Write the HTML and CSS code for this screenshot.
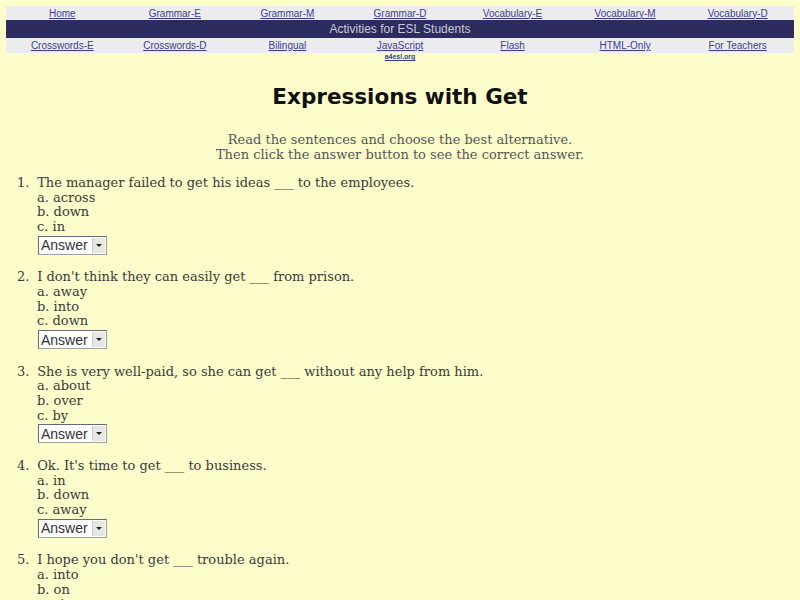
FILE: index.html
```html
<!DOCTYPE html>
<html lang="en">
<head>
    <meta charset="UTF-8">
    <title>Expressions with Get</title>
    <link rel="stylesheet" href="styles.css">
</head>
<body>
    <table class="nav">
        <tr class="nav-row">
            <td><a href="#">Home</a></td>
            <td><a href="#">Grammar-E</a></td>
            <td><a href="#">Grammar-M</a></td>
            <td><a href="#">Grammar-D</a></td>
            <td><a href="#">Vocabulary-E</a></td>
            <td><a href="#">Vocabulary-M</a></td>
            <td><a href="#">Vocabulary-D</a></td>
        </tr>
        <tr class="nav-band">
            <td colspan="7">Activities for ESL Students</td>
        </tr>
        <tr class="nav-row">
            <td><a href="#">Crosswords-E</a></td>
            <td><a href="#">Crosswords-D</a></td>
            <td><a href="#">Bilingual</a></td>
            <td><a href="#">JavaScript</a></td>
            <td><a href="#">Flash</a></td>
            <td><a href="#">HTML-Only</a></td>
            <td><a href="#">For Teachers</a></td>
        </tr>
        <tr class="nav-foot">
            <td colspan="7"><a href="#">a4esl.org</a></td>
        </tr>
    </table>

    <h1 class="title">Expressions with <i>Get</i></h1>

    <p class="intro">
        Read the sentences and choose the best alternative.<br>
        Then click the answer button to see the correct answer.
    </p>

    <ol class="quiz">
        <li>
            The manager failed to get his ideas ___ to the employees.
            <div class="opt">a. across</div>
            <div class="opt">b. down</div>
            <div class="opt">c. in</div>
            <span class="answer-box"><select class="answer"><option>Answer</option><option>across</option></select></span>
        </li>
        <li>
            I don't think they can easily get ___ from prison.
            <div class="opt">a. away</div>
            <div class="opt">b. into</div>
            <div class="opt">c. down</div>
            <span class="answer-box"><select class="answer"><option>Answer</option><option>away</option></select></span>
        </li>
        <li>
            She is very well-paid, so she can get ___ without any help from him.
            <div class="opt">a. about</div>
            <div class="opt">b. over</div>
            <div class="opt">c. by</div>
            <span class="answer-box"><select class="answer"><option>Answer</option><option>by</option></select></span>
        </li>
        <li>
            Ok. It's time to get ___ to business.
            <div class="opt">a. in</div>
            <div class="opt">b. down</div>
            <div class="opt">c. away</div>
            <span class="answer-box"><select class="answer"><option>Answer</option><option>down</option></select></span>
        </li>
        <li>
            I hope you don't get ___ trouble again.
            <div class="opt">a. into</div>
            <div class="opt">b. on</div>
            <div class="opt">c. at</div>
            <span class="answer-box"><select class="answer"><option>Answer</option><option>into</option></select></span>
        </li>
    </ol>
</body>
</html>
```

FILE: styles.css
```css
body {
    margin: 6px;
    background: #fdfdcc;
    color: #3a3a3a;
    font-family: "DejaVu Serif", serif;
    font-size: 13px;
}

/* top link table */
.nav {
    width: 100%;
    border-collapse: collapse;
    table-layout: fixed;
    font-family: "Liberation Sans", Arial, sans-serif;
    font-size: 10px;
}

.nav td {
    padding: 0;
    text-align: center;
}

.nav a {
    color: #3b3b92;
}

.nav-row td {
    background: #ececee;
    height: 14px;
}

.nav-band td {
    background: #2c2c5e;
    color: #c9c9dc;
    font-size: 12px;
    height: 18px;
}

.nav-row + .nav-band + .nav-row td {
    height: 15px;
}

.nav-foot td {
    font-size: 7px;
    font-weight: bold;
    height: 9px;
    vertical-align: top;
}

.title {
    margin: 22px 0 0;
    text-align: center;
    font-family: "DejaVu Sans", sans-serif;
    font-size: 21.5px;
    font-weight: bold;
    color: #111;
}

.title i {
    font-style: normal;
}

.intro {
    margin: 23px 0 0;
    text-align: center;
    color: #555;
    line-height: 15px;
}

/* questions */
.quiz {
    margin: 14px 0 0;
    padding-left: 31px;
    line-height: 14.7px;
    list-style: none;
    counter-reset: q;
}

.quiz li {
    margin-bottom: 15.5px;
    counter-increment: q;
}

.quiz li::before {
    content: counter(q) ".";
    display: inline-block;
    width: 16px;
    margin-left: -20px;
}

.answer-box {
    position: relative;
    display: inline-block;
    margin-left: 1px;
    margin-top: 1px;
}

.answer {
    appearance: none;
    -webkit-appearance: none;
    width: 69px;
    height: 19px;
    font-family: "Liberation Sans", Arial, sans-serif;
    font-size: 14px;
    color: #333;
    background: #fff;
    border: 1px solid #a0a0a0;
    border-top-color: #6a6a6a;
    border-left-color: #6a6a6a;
    border-radius: 0;
    padding: 0 0 0 2px;
    vertical-align: top;
}

/* the little drop button on the right */
.answer-box::after {
    content: "";
    position: absolute;
    top: 2px;
    right: 2px;
    width: 12px;
    height: 15px;
    background: #e6e6e2;
    border-left: 1px solid #ccc;
    pointer-events: none;
}

.answer-box::before {
    content: "";
    position: absolute;
    top: 8px;
    right: 5px;
    border: 3px solid transparent;
    border-top: 3px solid #222;
    border-bottom: 0;
    z-index: 1;
    pointer-events: none;
}
```
